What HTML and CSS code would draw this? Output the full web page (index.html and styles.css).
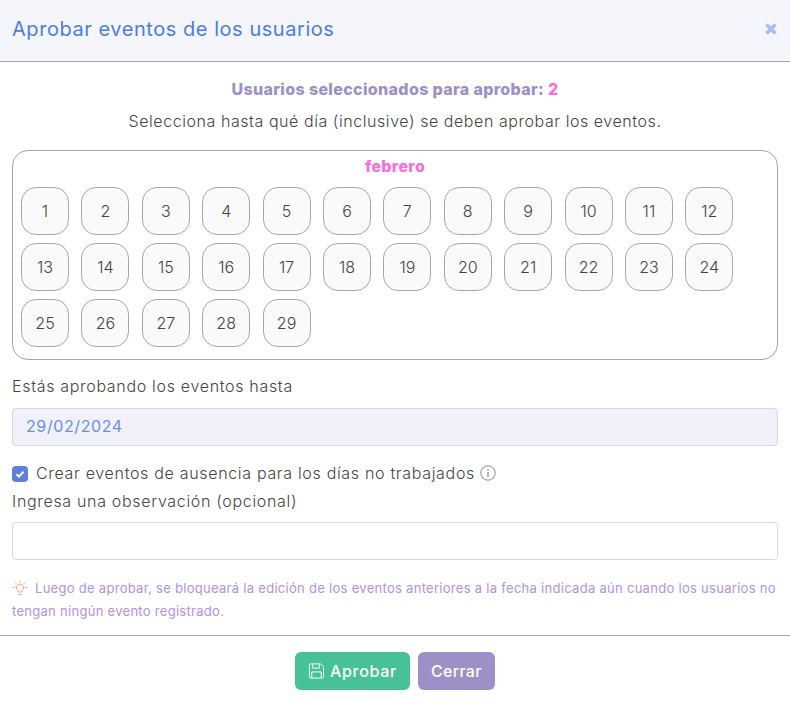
FILE: index.html
```html
<!DOCTYPE html>
<html lang="es">
<head>
<meta charset="utf-8">
<title>Aprobar eventos</title>
<link rel="stylesheet" href="styles.css">
</head>
<body>
<div class="modal">
  <header class="modal-header">
    <h1 class="modal-title">Aprobar eventos de los usuarios</h1>
    <svg class="close" viewBox="0 0 14 14" width="14" height="14" aria-label="Cerrar"><path d="M2.500 2.500l9 9M11.500 2.500l-9 9" stroke="#a9bcf0" stroke-width="3.6" fill="none"/></svg>
  </header>
  <main class="modal-body">
    <p class="selected">Usuarios seleccionados para aprobar: <span class="pink">2</span></p>
    <p class="hint">Selecciona hasta qué día (inclusive) se deben aprobar los eventos.</p>
    <section class="calendar">
      <div class="month">febrero</div>
      <div class="days">
        <div class="day">1</div><div class="day">2</div><div class="day">3</div><div class="day">4</div><div class="day">5</div><div class="day">6</div><div class="day">7</div><div class="day">8</div><div class="day">9</div><div class="day">10</div><div class="day">11</div><div class="day">12</div>
        <div class="day">13</div><div class="day">14</div><div class="day">15</div><div class="day">16</div><div class="day">17</div><div class="day">18</div><div class="day">19</div><div class="day">20</div><div class="day">21</div><div class="day">22</div><div class="day">23</div><div class="day">24</div>
        <div class="day">25</div><div class="day">26</div><div class="day">27</div><div class="day">28</div><div class="day">29</div>
      </div>
    </section>
    <label class="label until">Estás aprobando los eventos hasta</label>
    <div class="field readonly">29/02/2024</div>
    <div class="check-row">
      <span class="checkbox"><svg viewBox="0 0 16 16" width="16" height="16"><path d="M4.500 8.300l2.400 2.300 4.600-4.800" stroke="#fff" stroke-width="2" fill="none"/></svg></span>
      <span class="label">Crear eventos de ausencia para los días no trabajados</span>
      <svg class="info" viewBox="0 0 16 16" width="16" height="16"><circle cx="8" cy="8" r="7.200" fill="none" stroke="#555" stroke-width=".7"/><path d="M8 7v5M8 4v1.400" stroke="#555" stroke-width=".9" fill="none"/></svg>
    </div>
    <label class="label obs">Ingresa una observación (opcional)</label>
    <div class="field"></div>
    <p class="note"><svg class="bulb" viewBox="0 0 16 16" width="16" height="16"><g fill="none" stroke="#f4a57c" stroke-width="1"><path d="M8 4a3.600 3.600 0 0 0-2 6.600V12h4v-1.400A3.600 3.600 0 0 0 8 4z"/><path d="M6.300 14.500h3.400M8 .5v1.800M1 7.500h1.800M13.200 7.500H15M3 2.500l1.200 1.200M13 2.500l-1.200 1.200"/></g></svg>Luego de aprobar, se bloqueará la edición de los eventos anteriores a la fecha indicada aún cuando los usuarios no tengan ningún evento registrado.</p>
  </main>
  <footer class="modal-footer">
    <button class="btn green"><svg viewBox="0 0 18 18" width="18" height="18"><g fill="none" stroke="#fff" stroke-width="1"><path d="M1.500 3a1.500 1.500 0 0 1 1.500-1.500h10.500l3 3V15a1.500 1.500 0 0 1-1.500 1.500H3A1.500 1.500 0 0 1 1.500 15z"/><path d="M5 1.500v4.500h7V1.500M4 16.500V10h10v6.500"/></g></svg>Aprobar</button>
    <button class="btn purple">Cerrar</button>
  </footer>
</div>
</body>
</html>
```
FILE: styles.css
```css
* { box-sizing: border-box; }
html, body { margin: 0; padding: 0; background: #fff; }
body { font-family: Inter, "Open Sans", sans-serif; color: #444; width: 790px; height: 702px; overflow: hidden; }
.modal { display: flex; flex-direction: column; height: 702px; }
.modal-header { height: 62px; background: #f4f6fb; border-bottom: 1px solid #a5a5ad; display: flex; align-items: center; justify-content: space-between; padding: 0 12px 3px 12px; }
.modal-title { margin: 0; font-size: 20px; font-weight: 400; color: #4d7ce0; letter-spacing: 0.55px; }
.close { display: block; margin-top: -1px; }
.modal-body { padding: 0 12px; flex: 1; }
.selected { margin: 18px 0 0; height: 20px; line-height: 18px; text-align: center; font-weight: 800; font-size: 16px; color: #9c90c6; letter-spacing: 0.35px; }
.pink { color: #f56ee0; }
.hint { margin: 12px 0 0; height: 20px; line-height: 18px; text-align: center; font-size: 16px; font-weight: 300; color: #444; letter-spacing: 0.56px; }
.calendar { margin-top: 18px; height: 210px; border: 1px solid #a5a5ad; border-radius: 16px; padding: 6px 8px 0; }
.month { height: 20px; line-height: 18px; text-align: center; font-weight: 800; font-size: 16px; color: #f56ee0; letter-spacing: 0.3px; }
.days { margin-top: 10px; display: grid; grid-template-columns: repeat(12, 48px); column-gap: 12.400px; row-gap: 8px; }
.day { height: 48px; border: 1px solid #a5a5ad; border-radius: 15px; background: #fafafa; display: flex; align-items: center; justify-content: center; font-size: 16px; font-weight: 300; color: #444; }
.label { font-size: 16px; font-weight: 300; color: #444; height: 20px; line-height: 18px; display: block; letter-spacing: 0.68px; }
.until { margin-top: 17px; }
.field { height: 38px; border: 1px solid #d5d8de; border-radius: 4px; background: #fff; }
.readonly { margin-top: 11px; background: #f1f1fb; color: #6c8fe6; font-size: 16px; font-weight: 400; line-height: 34px; padding-left: 13px; letter-spacing: 0.6px; }
.check-row { margin-top: 18px; height: 20px; display: flex; align-items: center; gap: 8px; }
.check-row .label { flex: none; }
.check-row .info { margin-left: -3px; margin-top: -2px; }
.checkbox { width: 16px; height: 16px; background: #5c80dc; border-radius: 4px; display: block; flex: none; }
.checkbox svg { display: block; }
.obs { margin-top: 8px; }
.obs + .field { margin-top: 10px; }
.note { margin: 17px 0 0; font-size: 13px; font-weight: 400; line-height: 23px; color: #ab94ea; letter-spacing: 0.29px; }
.bulb { vertical-align: -3px; margin-right: 7px; }
.modal-footer { height: 67px; border-top: 1px solid #a5a5ad; display: flex; justify-content: center; align-items: flex-start; padding-top: 16px; gap: 8px; }
.btn { height: 38px; border: 0; border-radius: 6px; color: #fff; font-family: inherit; font-size: 16px; font-weight: 500; display: flex; align-items: center; padding: 0 13px; gap: 5px; }
.green { background: #47c296; width: 115px; letter-spacing: 0.7px; }
.purple { background: #9c90c6; width: 77px; letter-spacing: 0.3px; }
```
